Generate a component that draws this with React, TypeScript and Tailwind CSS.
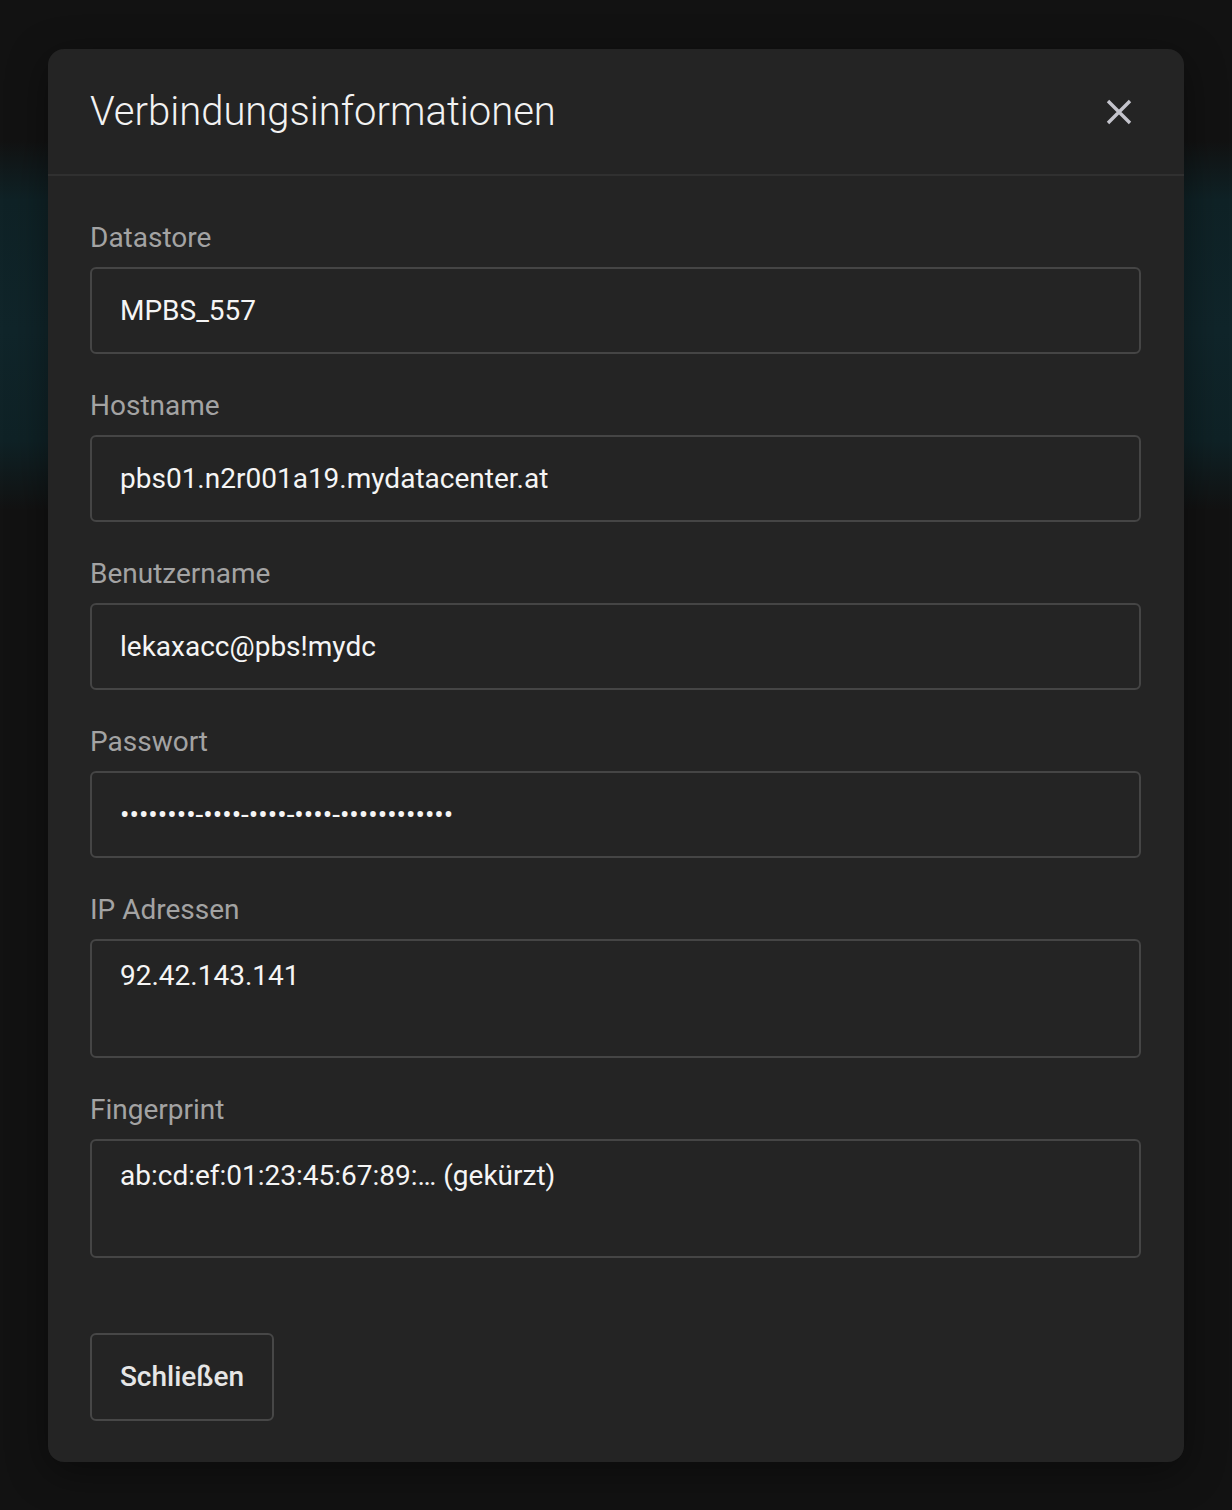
import React from "react";

function Field({ label, value, multi }: { label: string; value: string; multi?: boolean }) {
  return (
    <div className="flex flex-col">
      <label className="text-[28px] leading-[36px] text-[#a3a3a3] mb-[11px]">{label}</label>
      {multi ? (
        <div className="h-[119px] rounded-[6px] border-2 border-[#454545] bg-[#242424] px-[28px] pt-[14px] text-[28px] leading-[42px] text-[#f5f5f5]">
          {value}
        </div>
      ) : (
        <div className="h-[87px] flex items-center rounded-[6px] border-2 border-[#454545] bg-[#242424] px-[28px] text-[28px] leading-[42px] text-[#f5f5f5]">
          {value}
        </div>
      )}
    </div>
  );
}

export default function App() {
  return (
    <div
      className="min-h-[1510px] w-full bg-[#121212] bg-[linear-gradient(to_bottom,#121212_0px,#121212_140px,#0f2226_200px,#10252a_330px,#0f2226_440px,#121212_510px,#121212_100%)] pt-[49px] px-[48px]"
      style={{ fontFamily: "Roboto, 'Noto Sans', sans-serif" }}
    >
      <div className="w-[1136px] rounded-[16px] bg-[#242424] shadow-[0_10px_40px_rgba(0,0,0,0.4)]">
        <div className="h-[127px] flex items-center justify-between pl-[42px] pr-[50px] border-b-2 border-[#303030]">
          <h1 className="text-[40px] font-light text-[#f2f2f2] leading-none">
            Verbindungsinformationen
          </h1>
          <svg width="30" height="30" viewBox="0 0 30 30">
            <path d="M4 4 L26 26 M26 4 L4 26" stroke="#c4c4cc" strokeWidth="3.4" strokeLinecap="butt" />
          </svg>
        </div>
        <div className="pt-[44px] pl-[42px] pr-[43px] pb-[41px] flex flex-col gap-[34px]">
          <Field label="Datastore" value="MPBS_557" />
          <Field label="Hostname" value="pbs01.n2r001a19.mydatacenter.at" />
          <Field label="Benutzername" value="lekaxacc@pbs!mydc" />
          <Field label="Passwort" value="••••••••-••••-••••-••••-••••••••••••" />
          <Field label="IP Adressen" value="92.42.143.141" multi />
          <Field label="Fingerprint" value="ab:cd:ef:01:23:45:67:89:… (gekürzt)" multi />
          <div className="mt-[41px]">
            <button className="h-[88px] w-[184px] rounded-[6px] border-2 border-[#474747] bg-[#242424] text-[28px] font-medium text-[#e6e6e6]">
              Schließen
            </button>
          </div>
        </div>
      </div>
    </div>
  );
}
